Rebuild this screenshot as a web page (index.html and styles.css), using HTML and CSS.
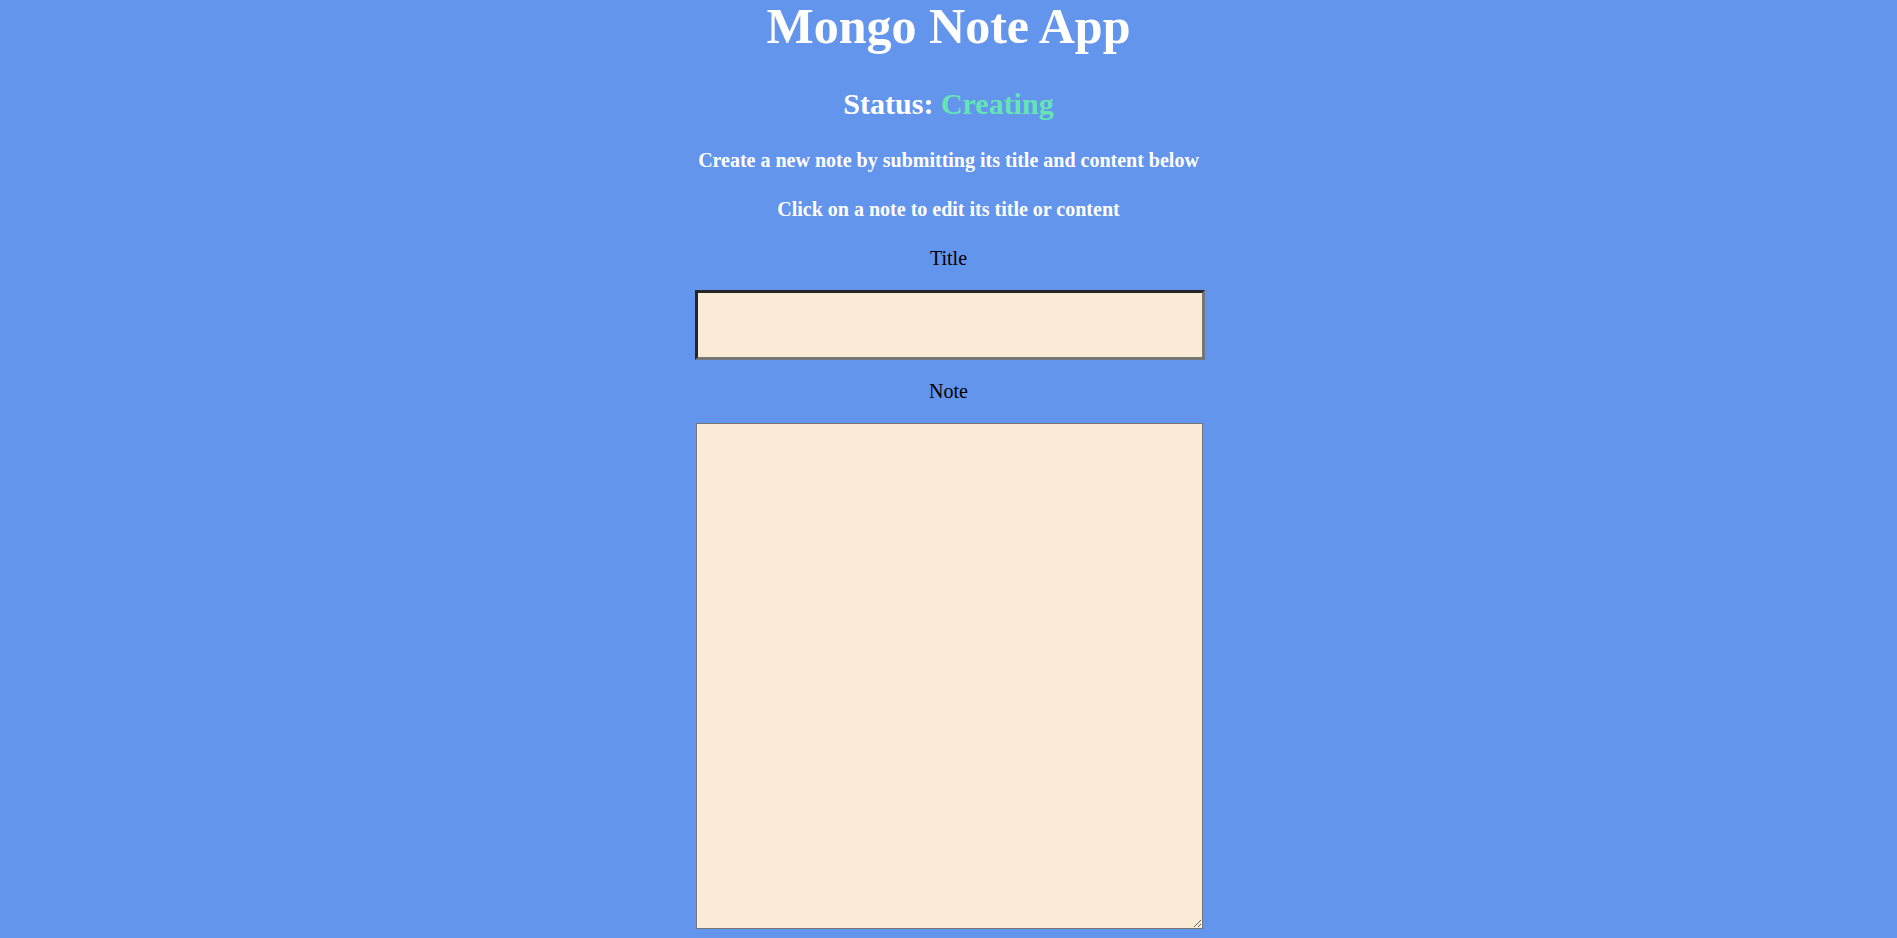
FILE: index.html
```html
<!DOCTYPE html>
<html lang="en">
<head>
<meta charset="utf-8">
<title>Mongo Note App</title>
<link rel="stylesheet" href="styles.css">
</head>
<body>
<main class="app">
  <h1 class="app-title">Mongo Note App</h1>
  <h2 class="status">Status: <span class="status-value">Creating</span></h2>
  <h3 class="hint hint-first">Create a new note by submitting its title and content below</h3>
  <h3 class="hint hint-second">Click on a note to edit its title or content</h3>
  <form class="note-form">
    <label class="field-label label-title" for="title">Title</label>
    <input class="title-input" id="title" type="text">
    <label class="field-label label-note" for="note">Note</label>
    <textarea class="note-input" id="note"></textarea>
  </form>
</main>
</body>
</html>
```
FILE: styles.css
```css
html, body {
  margin: 0;
  padding: 0;
  background: #6495ed;
}
body {
  font-family: "Liberation Serif", "Times New Roman", serif;
  color: #000;
}
.app {
  display: flex;
  flex-direction: column;
  align-items: center;
}
.app-title {
  margin: 0;
  font-size: 50px;
  line-height: 52px;
  font-weight: bold;
  color: #fff;
}
.status {
  margin: 34px 0 0;
  font-size: 30px;
  line-height: 36px;
  font-weight: bold;
  color: #fff;
}
.status-value {
  color: #63e6b3;
}
.hint {
  margin: 0;
  font-size: 20px;
  line-height: 22px;
  font-weight: bold;
  color: #fff;
}
.hint-first {
  margin-top: 27.4px;
}
.hint-second {
  margin-top: 27px;
}
.note-form {
  display: flex;
  flex-direction: column;
  align-items: center;
}
.field-label {
  font-size: 20px;
  line-height: 22px;
}
.label-title {
  margin-top: 27px;
}
.title-input {
  box-sizing: border-box;
  margin: 20.4px 0 0 2px;
  width: 510px;
  height: 70px;
  padding: 0;
  background: #faebd7;
  border: 3px solid;
  border-color: #262626 #767676 #767676 #262626;
  outline: none;
}
.label-note {
  margin-top: 20.4px;
}
.note-input {
  box-sizing: border-box;
  margin: 20.4px 0 0 1px;
  width: 507px;
  height: 506px;
  padding: 2px;
  background: #faebd7;
  border: 1px solid #767676;
  resize: both;
  outline: none;
}
```
